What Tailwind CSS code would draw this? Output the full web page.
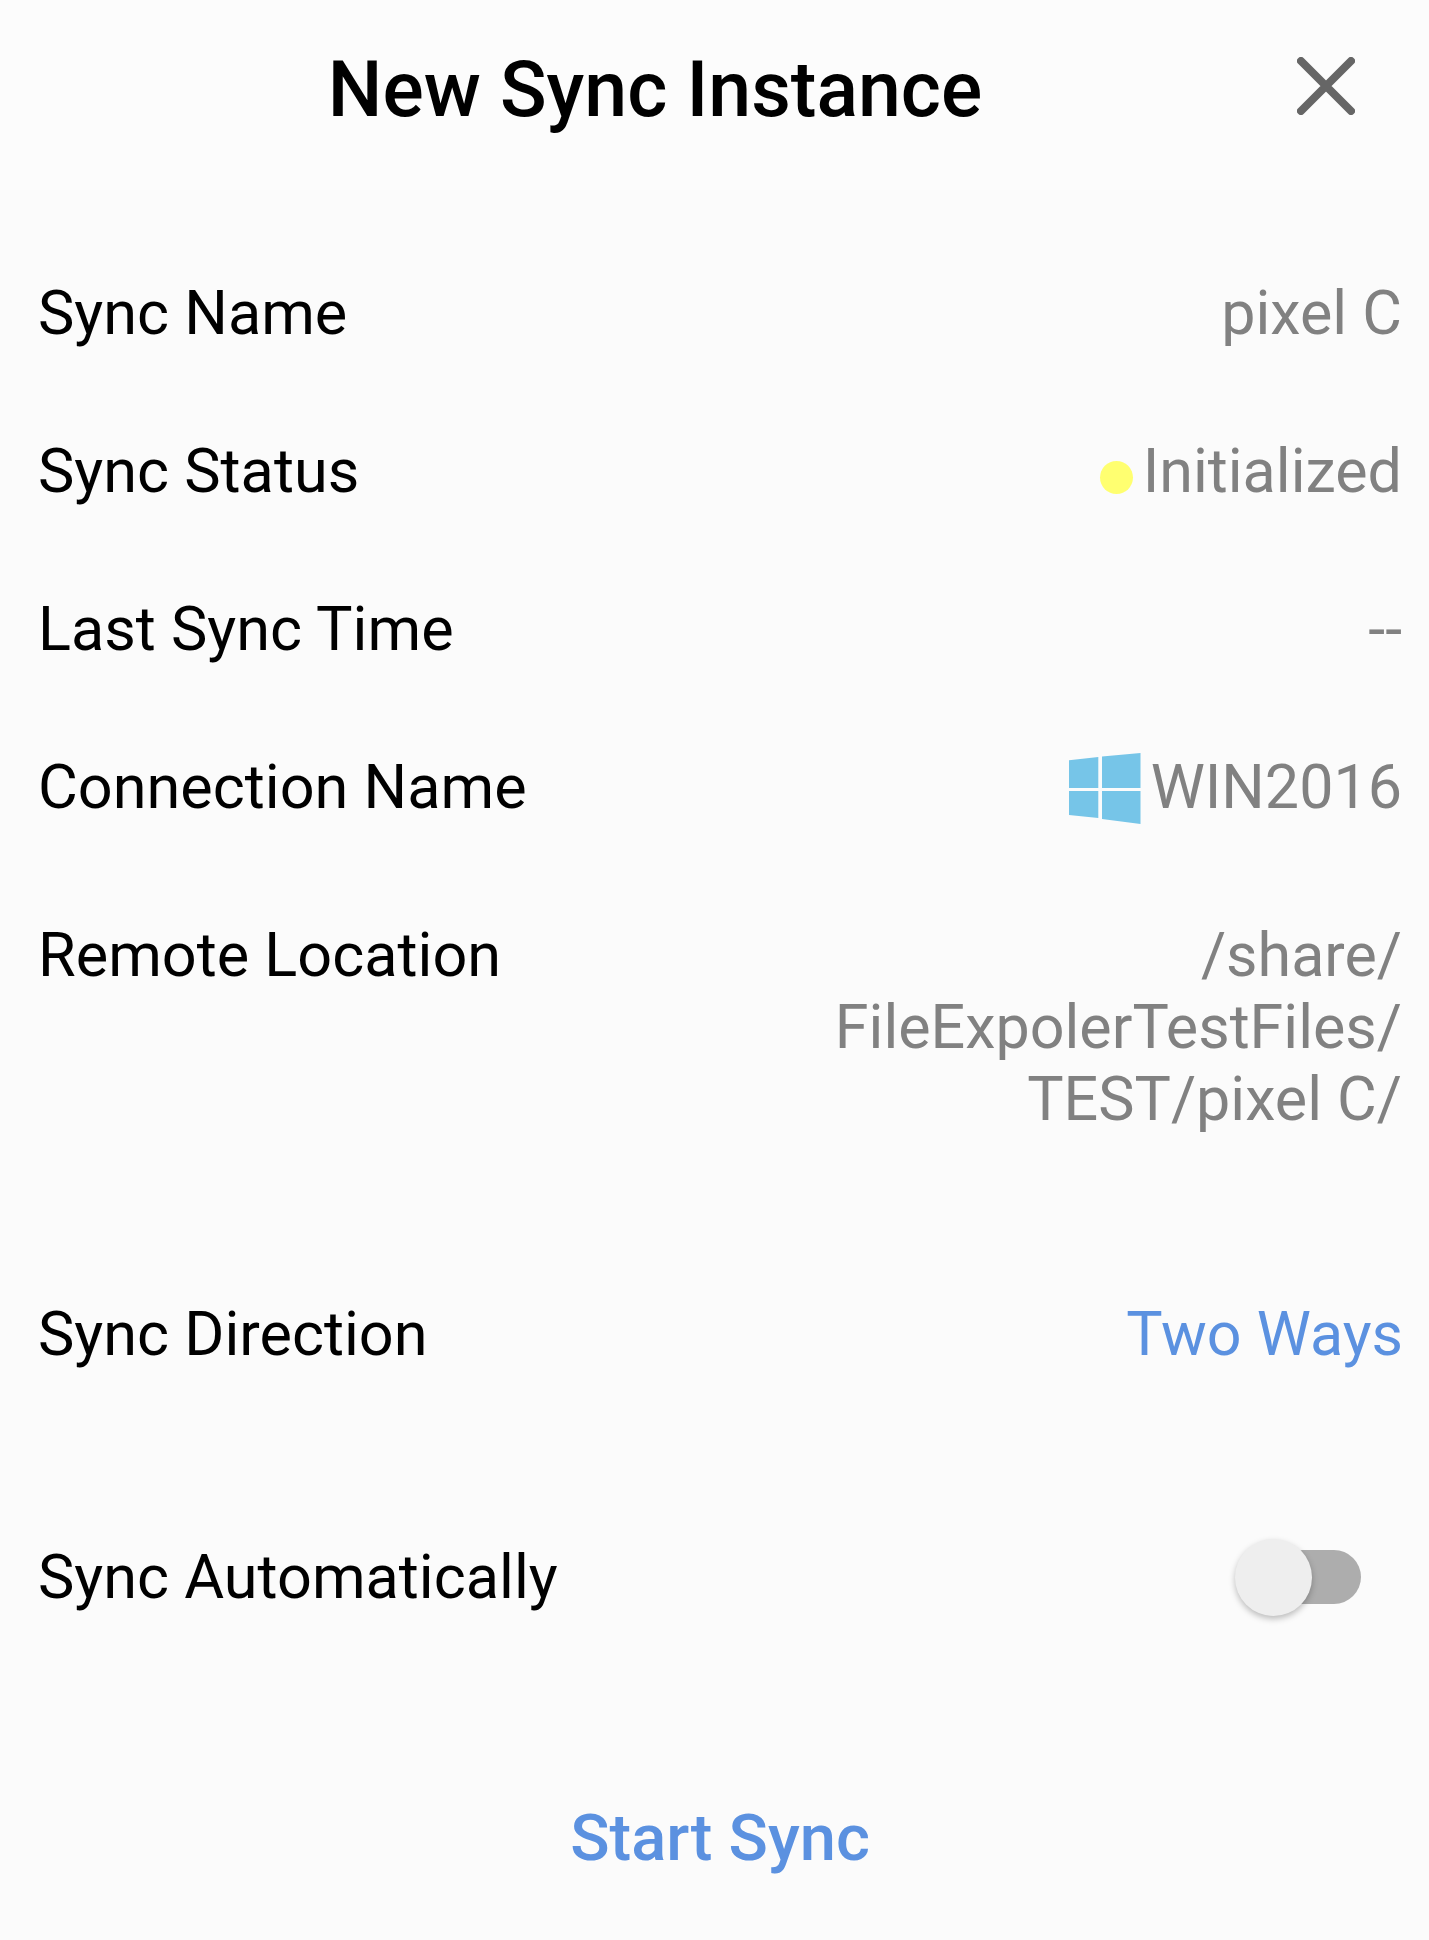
<!DOCTYPE html>
<html lang="en">
<head>
    <meta charset="UTF-8">
    <title>New Sync Instance</title>
    <script src="https://cdn.jsdelivr.net/npm/@tailwindcss/browser@4"></script>
</head>
<body class="bg-[#fbfbfb] font-['Roboto',sans-serif] text-[61.2px] leading-[72px] text-black">
    <div class="w-[1429px] h-[1940px] overflow-hidden flex flex-col">
        <!-- header -->
        <div class="h-[190px] bg-[#fcfcfc] relative flex items-start justify-center pt-[50px] shrink-0">
            <div class="text-[77px] leading-[80px] font-medium pr-[119px]">New Sync Instance</div>
            <svg class="absolute left-[1297px] top-[57px] w-[58px] h-[58px]" viewBox="0 0 58 58" fill="none" stroke="#666666" stroke-width="8" stroke-linecap="round">
                <path d="M4 4L54 54M54 4L4 54"/>
            </svg>
        </div>

        <div class="flex flex-col pl-[38px] pr-[26px] pt-[87px]">
            <div class="flex justify-between items-center h-[72px]">
                <div>Sync Name</div>
                <div class="text-[#818181] text-[61px] mr-[1px]">pixel C</div>
            </div>
            <div class="flex justify-between items-center h-[72px] mt-[86px]">
                <div>Sync Status</div>
                <div class="flex items-center text-[#818181] text-[61px] mr-[1px]">
                    <span class="w-[33px] h-[33px] rounded-full bg-[#ffff70] mr-[10px] mt-[12px]"></span>
                    <span>Initialized</span>
                </div>
            </div>
            <div class="flex justify-between items-center h-[72px] mt-[86px]">
                <div>Last Sync Time</div>
                <div class="text-[#818181] text-[61px] mr-[1px]">--</div>
            </div>
            <div class="flex justify-between items-center h-[72px] mt-[86px]">
                <div>Connection Name</div>
                <div class="flex items-center text-[#818181] text-[61px] mr-[1px]">
                    <svg class="w-[72px] h-[72px] mr-[10px] mt-[4px]" viewBox="0 0 72 72" fill="#76c5e8">
                        <path d="M0 7.3L29.3 4V35H0Z"/>
                        <path d="M33 3.5L71.5 0V35H33Z"/>
                        <path d="M0 38H29.3V65L0 62Z"/>
                        <path d="M33 38H71.5V71L33 66Z"/>
                    </svg>
                    <span>WIN2016</span>
                </div>
            </div>
            <div class="flex justify-between items-start mt-[96px]">
                <div>Remote Location</div>
                <div class="text-[#818181] text-[61px] mr-[1px] text-right w-[600px]">/share/<br>FileExpolerTestFiles/<br>TEST/pixel C/</div>
            </div>
            <div class="flex justify-between items-center h-[72px] mt-[163px]">
                <div>Sync Direction</div>
                <div class="text-[#5b91e0] text-[61px]">Two Ways</div>
            </div>
            <div class="flex justify-between items-center h-[72px] mt-[171px]">
                <div>Sync Automatically</div>
                <div class="relative w-[126px] h-[77px] mr-[42px] flex items-center">
                    <div class="absolute left-[14px] right-0 h-[54px] rounded-full bg-[#adadad]"></div>
                    <div class="absolute left-0 top-0 w-[77px] h-[77px] rounded-full bg-[#eeeeee] shadow-[0_3px_6px_rgba(0,0,0,0.25)]"></div>
                </div>
            </div>
        </div>

        <div class="text-center text-[#5b91e0] text-[65px] font-medium mt-[189px] pl-[11px]">Start Sync</div>
    </div>
</body>
</html>
